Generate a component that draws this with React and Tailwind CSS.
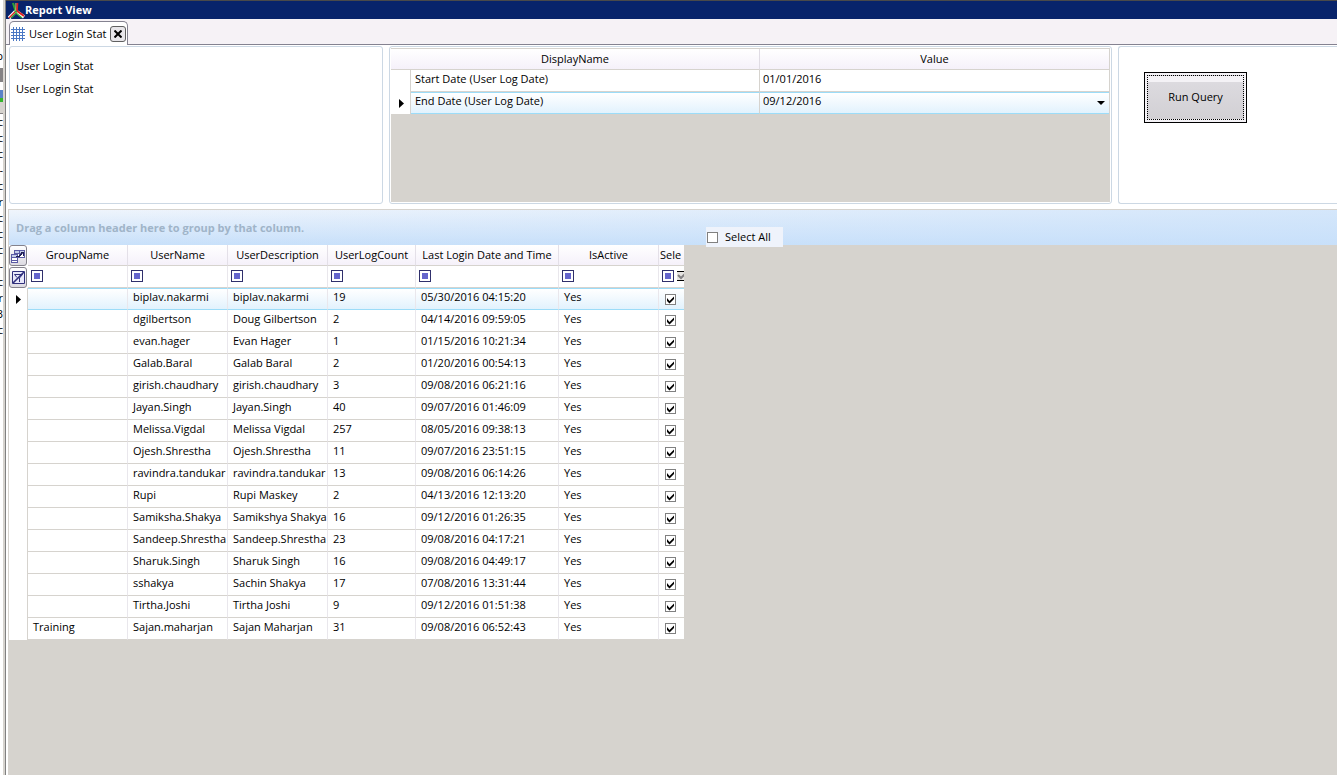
import { useState } from "react";

const users = [
  { group: "", name: "biplav.nakarmi", description: "biplav.nakarmi", count: 19, lastLogin: "05/30/2016 04:15:20" },
  { group: "", name: "dgilbertson", description: "Doug Gilbertson", count: 2, lastLogin: "04/14/2016 09:59:05" },
  { group: "", name: "evan.hager", description: "Evan Hager", count: 1, lastLogin: "01/15/2016 10:21:34" },
  { group: "", name: "Galab.Baral", description: "Galab Baral", count: 2, lastLogin: "01/20/2016 00:54:13" },
  { group: "", name: "girish.chaudhary", description: "girish.chaudhary", count: 3, lastLogin: "09/08/2016 06:21:16" },
  { group: "", name: "Jayan.Singh", description: "Jayan.Singh", count: 40, lastLogin: "09/07/2016 01:46:09" },
  { group: "", name: "Melissa.Vigdal", description: "Melissa Vigdal", count: 257, lastLogin: "08/05/2016 09:38:13" },
  { group: "", name: "Ojesh.Shrestha", description: "Ojesh.Shrestha", count: 11, lastLogin: "09/07/2016 23:51:15" },
  { group: "", name: "ravindra.tandukar", description: "ravindra.tandukar", count: 13, lastLogin: "09/08/2016 06:14:26" },
  { group: "", name: "Rupi", description: "Rupi Maskey", count: 2, lastLogin: "04/13/2016 12:13:20" },
  { group: "", name: "Samiksha.Shakya", description: "Samikshya Shakya", count: 16, lastLogin: "09/12/2016 01:26:35" },
  { group: "", name: "Sandeep.Shrestha", description: "Sandeep.Shrestha", count: 23, lastLogin: "09/08/2016 04:17:21" },
  { group: "", name: "Sharuk.Singh", description: "Sharuk Singh", count: 16, lastLogin: "09/08/2016 04:49:17" },
  { group: "", name: "sshakya", description: "Sachin Shakya", count: 17, lastLogin: "07/08/2016 13:31:44" },
  { group: "", name: "Tirtha.Joshi", description: "Tirtha Joshi", count: 9, lastLogin: "09/12/2016 01:51:38" },
  { group: "Training", name: "Sajan.maharjan", description: "Sajan Maharjan", count: 31, lastLogin: "09/08/2016 06:52:43" },
];

const columns = ["GroupName", "UserName", "UserDescription", "UserLogCount", "Last Login Date and Time", "IsActive"];

// Right edge of the list in the window behind this one
const listEdge = ["c", "c", "c", "-", "c", "r", "c", "c", "c", "-", "c", "r", "3", "c"];

const AppLogo = () => (
  <svg width="17" height="17" viewBox="0 0 17 17" fill="none" aria-hidden="true">
    <path d="M8 9 1 16" stroke="#fff" strokeWidth="3.500" />
    <path d="M8 9 1 16" stroke="#e02020" strokeWidth="1.500" />
    <path d="M9 10 3 16" stroke="#2f9e35" strokeWidth="1.200" />
    <path d="M9 10 16 15" stroke="#fff" strokeWidth="3.500" />
    <path d="M9 9 16 14" stroke="#e02020" strokeWidth="2" />
    <path d="M8 11 14 16" stroke="#38a838" strokeWidth="1.200" />
    <path d="M5 1 8 10" stroke="#2f9e35" strokeWidth="2.200" />
    <path d="M8 1v8" stroke="#f0d878" strokeWidth="1" />
    <path d="M9.500 1 9 9" stroke="#e02020" strokeWidth="1.600" />
  </svg>
);

const GridIcon = () => (
  <svg width="14" height="14" viewBox="0 0 14 14" stroke="#4a78c4" shapeRendering="crispEdges" aria-hidden="true">
    <path d="M2.5 0v14M5.5 0v14M8.5 0v14M11.5 0v14M0 2.5h14M0 5.5h14M0 8.5h14M0 11.5h14" />
  </svg>
);

const ColumnsIcon = () => (
  <svg width="14" height="14" viewBox="0 0 14 14" fill="#fff" stroke="#5a5aa4" shapeRendering="crispEdges" aria-hidden="true">
    <path d="M3.5 1.5h10v7h-10zM3.5 4.5h10M8.5 1.5v7" />
    <path d="M4 2h4v2H4zM9 2h4v2H9z" fill="#c4cce8" stroke="none" />
    <path d="M.5 5.5h6v8h-6zM.5 8.5h6M.5 11.5h6" />
    <path d="M1 6h5v2H1z" fill="#c4cce8" stroke="none" />
    <path d="M5 7.5h3l3-3M9.500 3.500h3v3" stroke="#202050" fill="none" />
  </svg>
);

const ClearFilterIcon = () => (
  <svg width="13" height="13" viewBox="0 0 13 13" fill="none" stroke="#30307c" aria-hidden="true">
    <path d="M.5.5h12v12H.5z" fill="#e8e8fa" />
    <path d="M2.500 3.500h8l-3 3.500v4M2.500 3.500 5 6.500" />
    <path d="M1 12 12 1" strokeWidth="1.600" />
  </svg>
);

const RowArrow = () => (
  <svg width="5" height="9" viewBox="0 0 5 9" className="block" aria-hidden="true">
    <path d="M0 0 5 4.5 0 9z" />
  </svg>
);

const CheckBox = ({ label, checked, onChange }) => (
  <span className="relative flex size-[11px] shrink-0">
    <input
      type="checkbox"
      aria-label={label}
      checked={checked}
      onChange={onChange}
      className="size-full appearance-none border border-[#808080] bg-white"
    />
    {checked && (
      <svg viewBox="0 0 11 11" className="pointer-events-none absolute inset-0 size-full" aria-hidden="true">
        <path d="M2 4v3l2.500 2.500L9 5V2.500L4.500 7z" />
      </svg>
    )}
  </span>
);

const FilterButton = ({ label }) => (
  <button type="button" aria-label={label} className="flex size-3 shrink-0 items-center justify-center border border-[#30306c] bg-white">
    <span className="size-1.5 bg-[#6666cc]" />
  </button>
);

const BackgroundEdge = () => (
  <div aria-hidden="true" className="flex w-1.5 shrink-0 border-r border-[#808080] bg-[#d6d3ce]">
    <div className="w-[3px] overflow-hidden bg-white">
      <div className="flex h-16 items-end justify-end pb-[2px] leading-3">p</div>
      <div className="mt-1 h-3.5 bg-[#848284]" />
      <div className="mt-2 h-2 bg-[#5a82c8]" />
      <div className="h-1 bg-[#35b52c]" />
      <div className="h-3 border-b border-[#848284] bg-[#d6d3ce]" />
      {listEdge.map((letter, i) => (
        <div key={i} className="flex h-4 items-center justify-end">
          {letter}
        </div>
      ))}
    </div>
  </div>
);

const Parameters = () => {
  const headCell = "h-[21px] border-b border-[#d6d3ce] bg-linear-to-b from-white to-[#f5f1fa] p-0 font-normal";
  const activeCell = "border-y border-[#9cdcf8] bg-linear-to-b from-white to-[#e2f2fd] p-0";
  return (
    <div className="min-w-0 flex-1 rounded-[3px] border border-[#ccd8e4] p-px">
      <div className="h-full border-t border-[#d6d3ce] bg-[#d6d3ce] pr-px">
        <table className="w-full table-fixed border-separate border-spacing-0">
          <colgroup>
            <col className="w-5" />
            <col />
            <col />
          </colgroup>
          <thead>
            <tr>
              <th colSpan={2} className={`${headCell} border-r border-r-[#e0dce4]`}>DisplayName</th>
              <th className={headCell}>Value</th>
            </tr>
          </thead>
          <tbody>
            <tr className="h-[22px] bg-white">
              <td className="border-r border-[#d6d3ce] p-0" />
              <td className="border-r border-b border-[#d6d3ce] p-0 pb-1 pl-1">
                <label htmlFor="start">Start Date (User Log Date)</label>
              </td>
              <td className="border-b border-[#d6d3ce] p-0 pl-[3px]">
                <input id="start" defaultValue="01/01/2016" className="block h-5 w-full pb-1 outline-none" />
              </td>
            </tr>
            <tr className="h-[22px] bg-white">
              <td className="border-r border-[#d6d3ce] p-0 pl-2">
                <RowArrow />
              </td>
              <td className={`${activeCell} border-r border-r-[#d6d3ce] pb-1 pl-1`}>
                <label htmlFor="end" className="block">End Date (User Log Date)</label>
              </td>
              <td className={`${activeCell} pr-1 pl-[3px]`}>
                <div className="flex items-center">
                  <select id="end" defaultValue="09/12/2016" className="block h-5 flex-1 appearance-none pb-1 outline-none">
                    <option>09/12/2016</option>
                  </select>
                  <svg width="8" height="4" viewBox="0 0 8 4" aria-hidden="true">
                    <path d="M0 0h8L4 4z" />
                  </svg>
                </div>
              </td>
            </tr>
          </tbody>
        </table>
      </div>
    </div>
  );
};

const UserGrid = ({ selected, onToggle }) => {
  const toolButton = "flex h-[21px] w-[18px] items-center justify-center rounded-[3px] border border-[#84828c] bg-linear-to-b from-white to-[#dcdae2]";
  return (
    <table className="w-[675px] table-fixed border-separate border-spacing-0 bg-white">
      <colgroup>
        <col className="w-[19px]" />
        <col className="w-[100px]" />
        <col className="w-[100px]" />
        <col className="w-[100px]" />
        <col className="w-[88px]" />
        <col className="w-[143px]" />
        <col className="w-[100px]" />
        <col className="w-[25px]" />
      </colgroup>
      <thead>
        <tr className="h-[21px]">
          <th className="p-0">
            <button type="button" aria-label="Choose columns" className={toolButton}>
              <ColumnsIcon />
            </button>
          </th>
          {columns.map((column) => (
            <th
              key={column}
              className="border-r border-b border-r-[#e4e0e8] border-b-[#d6d3ce] bg-linear-to-b from-white to-[#f5f1fa] p-0 font-normal whitespace-nowrap"
            >
              {column}
            </th>
          ))}
          <th className="overflow-hidden border-b border-[#d6d3ce] bg-linear-to-b from-white to-[#f5f1fa] p-0 pl-px text-left font-normal">
            Sele
          </th>
        </tr>
        <tr className="h-[22px]">
          <td className="p-0">
            <button type="button" aria-label="Clear filters" className={toolButton}>
              <ClearFilterIcon />
            </button>
          </td>
          {columns.map((column) => (
            <td key={column} className="border-r border-b border-r-[#e9e7ec] border-b-[#d6d3ce] p-0 pt-1 pl-[3px] align-top">
              <FilterButton label={`Filter ${column}`} />
            </td>
          ))}
          <td className="border-b border-[#d6d3ce] p-0 pt-1 pl-[3px] align-top">
            <div className="flex gap-[3px] overflow-hidden">
              <FilterButton label="Filter selected" />
              <svg width="12" height="12" viewBox="0 0 12 12" className="shrink-0" aria-hidden="true">
                <path d="M0 1.500h12M0 10.500h12" stroke="#000" />
                <path d="M0 2h12v8H0z" fill="#e6e4e2" />
                <path d="M1 5l3 3 5-5" fill="none" stroke="#848284" strokeWidth="2" />
              </svg>
            </div>
          </td>
        </tr>
      </thead>
      <tbody>
        {users.map((user, i) => {
          const cell =
            i === 0
              ? "border-y border-r border-y-[#9cdcf8] border-r-[#e9e7ec] bg-linear-to-b from-white to-[#e2f2fd] p-0 pb-1 pl-[5px]"
              : "border-r border-b border-r-[#e9e7ec] border-b-[#d6d3ce] p-0 pb-1 pl-[5px]";
          return (
            <tr key={user.name} className="h-[22px] whitespace-nowrap">
              <td className="border-r border-[#d6d3ce] p-0 pl-[7px]">{i === 0 && <RowArrow />}</td>
              <td className={cell}>{user.group}</td>
              <td className={cell}>{user.name}</td>
              <td className={cell}>{user.description}</td>
              <td className={cell}>{user.count}</td>
              <td className={cell}>{user.lastLogin}</td>
              <td className={cell}>Yes</td>
              <td
                className={
                  i === 0
                    ? "border-y border-[#9cdcf8] bg-linear-to-b from-white to-[#e2f2fd] p-0 pl-1.5"
                    : "border-b border-[#d6d3ce] p-0 pl-1.5"
                }
              >
                <CheckBox label={`Select ${user.name}`} checked={selected[i]} onChange={() => onToggle(i)} />
              </td>
            </tr>
          );
        })}
      </tbody>
    </table>
  );
};

export default function App() {
  const [selected, setSelected] = useState(users.map(() => true));
  const [all, setAll] = useState(false);

  const toggle = (index) => setSelected(selected.map((value, i) => (i === index ? !value : value)));

  const toggleAll = () => {
    setSelected(users.map(() => !all));
    setAll(!all);
  };

  return (
    <div className="flex min-h-screen bg-white font-['Open_Sans',sans-serif] text-[11px] leading-4 text-black">
      <BackgroundEdge />

      <div className="flex min-w-0 flex-1 flex-col">
        <header className="flex h-[19px] items-center border-t border-[#4a4a4a] bg-[#08246b] pl-0.5 text-white">
          <AppLogo />
          <h1 className="font-bold">Report View</h1>
        </header>

        <nav className="flex h-[26px] items-end border-b border-[#848290] bg-[#f6f2f6] pl-[3px]">
          <div className="-mb-px flex h-6 items-center rounded-t-[5px] border border-b-0 border-[#848290] bg-white px-px">
            <GridIcon />
            <a href="#stat" className="ml-1 whitespace-nowrap">User Login Stat</a>
            <button
              type="button"
              aria-label="Close tab"
              className="ml-[3px] flex size-4 items-center justify-center rounded-[3px] border border-[#606060] bg-[#e8e6ea]"
            >
              <svg width="8" height="8" viewBox="0 0 8 8" stroke="#000" strokeWidth="2" aria-hidden="true">
                <path d="M.5.5l7 7M7.500.5l-7 7" />
              </svg>
            </button>
          </div>
        </nav>

        <main className="flex flex-1 flex-col">
          <section className="flex h-[164px] gap-1.5 overflow-hidden pt-px pb-[5px] pl-[3px]">
            <div className="w-[374px] rounded-[3px] border border-[#ccd8e4] px-1.5 pt-[11px]">
              <p>User Login Stat</p>
              <p className="mt-[7px]">User Login Stat</p>
            </div>
            <Parameters />
            <div className="w-[219px] rounded-l-[3px] border border-r-0 border-[#ccd8e4] pt-[25px] pl-[25px]">
              <button type="button" className="h-[51px] w-[103px] border border-black bg-[#f4f2f6] p-0.5">
                <span className="flex size-full items-center justify-center border border-dotted border-black bg-linear-to-b from-[#f4f2f6] from-15% via-[#dcdadf] via-15% to-[#d2d0d4] pb-0.5">
                  Run Query
                </span>
              </button>
            </div>
          </section>

          <section className="relative ml-0.5 flex-1 border-t border-l border-[#d6d3ce] bg-[#d6d3ce]">
            <div className="flex h-[35px] items-center bg-[linear-gradient(to_right,transparent,#c8e0fab0),linear-gradient(to_bottom,#f0f5fc,#c8e0fa)] pl-[7px] font-bold text-[#a0b4c8]">
              Drag a column header here to group by that column.
            </div>
            <label className="absolute top-[17px] left-[697px] flex h-5 items-center gap-[7px] bg-[#eff3fb] pr-3 pl-px">
              <CheckBox label="Select All" checked={all} onChange={toggleAll} />
              Select All
            </label>
            <UserGrid selected={selected} onToggle={toggle} />
          </section>
        </main>
      </div>
    </div>
  );
}
